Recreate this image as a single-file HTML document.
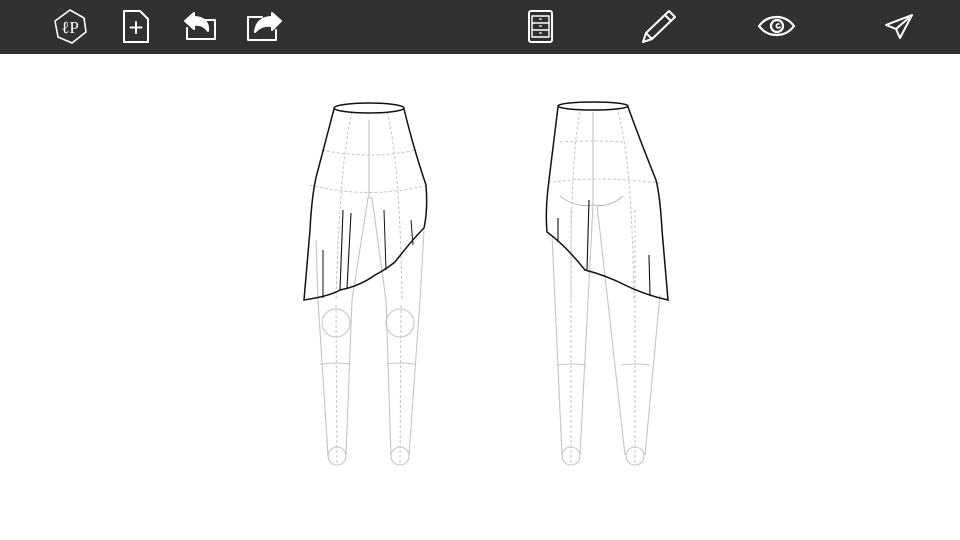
<!DOCTYPE html>
<html><head><style>
html,body{margin:0;padding:0;width:960px;height:540px;background:#fff;overflow:hidden;font-family:"Liberation Sans",sans-serif}
#bar{position:absolute;left:0;top:0;width:960px;height:54px;background:#313131}
svg{position:absolute;left:0;top:0}
</style></head><body>
<div id="bar"></div>
<svg width="960" height="540" viewBox="0 0 960 540" fill="none">
<g stroke="#fff" stroke-width="2" stroke-linejoin="round" stroke-linecap="round">
 <polygon points="70,10 84,18 86,32 72,43 58,37 55,21" stroke-width="1.6"/>
 <text x="70" y="33" fill="#fff" stroke="none" font-family="Liberation Serif,serif" font-size="17" text-anchor="middle">ℓP</text>
 <path d="M124,11 H140 L148,19 V42 H124 Z"/>
 <path d="M136,22 V33 M130.5,27.5 H141.5"/>
 <path d="M196,20 H215 V39 H187 V28"/>
 <path d="M185,21 L194,13 L194,17 C204,17 209,23 208,31 C204,26 200,24 194,25 L194,29 Z" fill="#fff"/>
 <path d="M262,17 H248 V40 H276 V30"/>
 <path d="M281,21 L272,13 L272,17 C262,17 256,22 255,32 C259,27 265,25 272,26 L272,30 Z" fill="#fff"/>
 <rect x="529" y="11" width="23" height="31" rx="2"/>
 <path d="M532,16 H549 V37 H532 Z" stroke-width="1.4"/>
 <path d="M532,23 H549 M532,30 H549" stroke-width="1.4"/>
 <path d="M540,19 H541 M540,26 H541 M540,33 H541" stroke-width="1.6"/>
 <path d="M643,42 L646,33 L669,11 L675,17 L652,39 Z M646,33 L652,39 M665,15 L671,21" stroke-width="2"/>
 <path d="M759,26 C768,14 785,14 794,26 C785,38 768,38 759,26 Z" stroke-width="2.2"/>
 <circle cx="777" cy="26" r="6" stroke-width="2.2"/>
 <path d="M779,24 A2,2 0 1 0 780,27" stroke-width="1.6"/>
 <path d="M912,15 L886,25 L896,29 L900,38 Z M896,29 L912,15" stroke-width="2"/>
</g>
<!-- FRONT legs -->
<g stroke="#c4c4c4" stroke-width="1.1">
 <path d="M316,240 L318,300 L328,455 M368,198 L352,300 L346,455"/>
 <path d="M372,198 L386,300 L391,455 M424,230 L420,300 L409,455"/>
 <circle cx="336" cy="323" r="14"/><circle cx="400" cy="323" r="14"/>
 <path d="M320,364 Q336,362 350,364 M387,364 Q401,362 415,364"/>
 <circle cx="337" cy="456" r="9"/><circle cx="400" cy="456" r="9"/>
 <path d="M369,120 L369,198 M367,198 L373,198"/>
</g>
<g stroke="#c4c4c4" stroke-width="1" stroke-dasharray="3,2">
 <path d="M336,305 L337,465 M401,305 L400,465"/>
 <path d="M352,112 Q340,160 336,300 M387,112 Q400,160 402,300"/>
 <path d="M322,150 Q369,160 416,150 M310,185 Q369,200 428,185"/>
</g>
<g stroke="#111" stroke-width="1.5">
 <ellipse cx="369" cy="108" rx="35" ry="5"/>
 <path d="M334,109 L318,170 Q312,190 310,230 L304,300 Q330,296 340,290 Q360,286 375,275 Q385,270 395,262 Q412,240 424,228 Q428,210 426,185 Q414,150 404,109"/>
 <path d="M343,210 L340,290 M351,213 L347,288" stroke-width="1.1"/>
 <path d="M384,210 L386,270 M411,220 L413,245 M323,250 L323,298" stroke-width="1"/>
</g>
<!-- BACK legs -->
<g stroke="#c4c4c4" stroke-width="1.1">
 <path d="M552,235 L562,455 M593,205 L580,455"/>
 <path d="M597,205 L625,455 M660,295 L645,455 M593,112 L593,205"/>
 <path d="M557,365 Q572,363 586,365 M621,365 Q636,363 650,365"/>
 <circle cx="571" cy="456" r="9"/><circle cx="635" cy="456" r="9"/>
 <path d="M560,196 Q575,208 593,205 Q610,208 623,196" stroke="#bbb"/>
</g>
<g stroke="#c4c4c4" stroke-width="1" stroke-dasharray="3,2">
 <path d="M571,210 L571,465 M635,210 L635,465"/>
 <path d="M580,112 Q570,160 571,300 M618,112 Q632,160 634,300"/>
 <path d="M560,142 Q593,140 624,142 M548,183 Q593,175 660,183"/>
</g>
<g stroke="#111" stroke-width="1.5">
 <ellipse cx="593" cy="106" rx="35" ry="4"/>
 <path d="M558,107 L549,180 Q545,210 547,232 Q565,245 585,270 Q605,275 625,285 Q645,295 668,300 L662,230 Q660,195 656,180 Q640,140 628,107"/>
 <path d="M558,218 L558,242 M589,200 L587,270 M649,255 L650,295" stroke-width="1.1"/>
</g>
</svg>
</body></html>
